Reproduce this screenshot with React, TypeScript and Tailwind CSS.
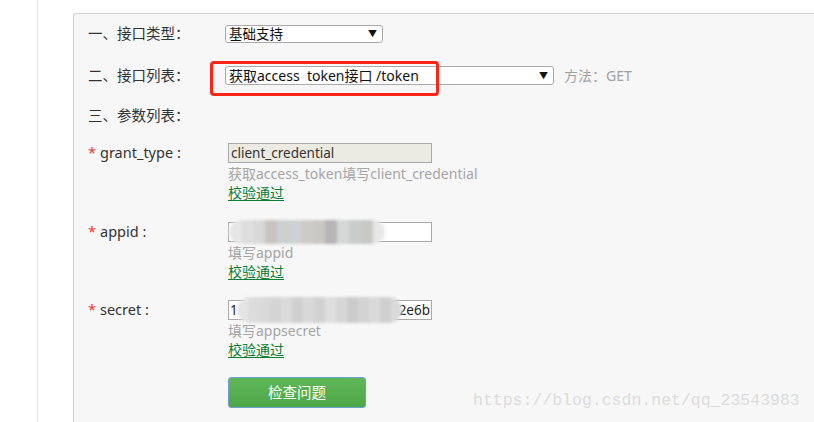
const font = "font-['Noto_Sans','Noto_Sans_CJK_SC',sans-serif]";

const Check = () => (
  <p className="h-[18px] leading-[18px] text-[14px] text-[#0a7d36] underline underline-offset-2">校验通过</p>
);

const Blur = ({ cells }: { cells: string[] }) => (
  <div className="absolute inset-y-[-3px] left-0 flex blur-[1.5px] rounded-full overflow-hidden">
    {cells.map((c, i) => (
      <div key={i} className="w-[12px] h-full" style={{ background: c }} />
    ))}
  </div>
);

const Field = ({
  label,
  hint,
  children,
  mt,
}: {
  label: string;
  hint: string;
  children: React.ReactNode;
  mt: string;
}) => (
  <div className={`flex ${mt}`}>
    <div className="w-[140px] h-[20px] flex items-center text-[14.5px] text-[#333]">
      <span className="text-[#e33] mr-[4px]">*</span>
      {label}
    </div>
    <div className="flex flex-col">
      {children}
      <p className="h-[20px] mt-[1px] leading-[20px] text-[14px] text-[#a5a5a5]">{hint}</p>
      <Check />
    </div>
  </div>
);

export default function App() {
  return (
    <div className={`relative w-[814px] h-[422px] overflow-hidden bg-white flex ${font}`}>
      <div className="w-[38px] h-full border-r border-[#e6e6e6] shrink-0" />
      <div className="ml-[35px] mt-[13px] flex-1 bg-[#f7f7f7] border-l border-t border-[#cfcfcf] rounded-tl-[3px] pl-[14px] pt-[11px]">
        {/* row 1 */}
        <div className="flex items-center h-[18px]">
          <div className="w-[137px] text-[14.5px] text-[#333]">一、接口类型：</div>
          <div className="w-[158px] h-[18px] bg-white border border-[#aaa] rounded-[3px] flex items-center justify-between pl-[3px] pr-[5px] text-[13.5px] text-[#111]">
            <span>基础支持</span>
            <span className="text-[9px]">▼</span>
          </div>
        </div>
        {/* row 2 */}
        <div className="flex items-center h-[19px] mt-[23px]">
          <div className="w-[137px] text-[14.5px] text-[#333]">二、接口列表：</div>
          <div className="relative w-[329px] h-[19px] bg-white border border-[#aaa] rounded-[3px] flex items-center justify-between pl-[3px] pr-[5px] text-[14px] text-[#111]">
            <span className="whitespace-pre">获取access  token接口 /token</span>
            <span className="text-[9px]">▼</span>
            <div className="absolute left-[-16px] top-[-6px] w-[229px] h-[35px] border-[3px] border-[#fe2418] rounded-[4px]" />
          </div>
          <span className="ml-[10px] text-[14px] text-[#a0a0a0]">方法：GET</span>
        </div>
        {/* row 3 */}
        <div className="h-[18px] leading-[18px] mt-[21px] text-[14.5px] text-[#333]">三、参数列表：</div>

        <Field label="grant_type :" hint="获取access_token填写client_credential" mt="mt-[19px]">
          <div className="w-[204px] h-[20px] bg-[#ebebe4] border border-[#a9a9a9] pl-[2px] text-[13.5px] leading-[18px] text-[#333]">
            client_credential
          </div>
        </Field>

        <Field label="appid :" hint="填写appid" mt="mt-[20px]">
          <div className="relative w-[204px] h-[20px] bg-white border border-[#a9a9a9]">
            <Blur
              cells={["#e6e6e6", "#dedede", "#d8d8d8", "#c7c4c2", "#cdd0d1", "#cfd2d3", "#cdcbc6", "#c9c8c1", "#b7b5b8", "#d6d7d7", "#cacccc", "#c8c8c6", "#e8e8e8"]}
            />
          </div>
        </Field>

        <Field label="secret :" hint="填写appsecret" mt="mt-[19px]">
          <div className="relative w-[204px] h-[20px] bg-white border border-[#a9a9a9] flex items-center justify-between px-[1px] text-[13.5px] text-[#222] overflow-visible">
            <span>1</span>
            <span>2e6b</span>
            <div className="absolute left-[8px] inset-y-[-4px] flex blur-[1.5px] rounded-full overflow-hidden">
              {["#e4e4e4", "#dcdcdc", "#d9d9d9", "#d4d4d4", "#dadada", "#cfcfcf", "#d8d8d8", "#d2d2d2", "#dedede", "#d6d6d6", "#cbcbcb", "#d3d3d3", "#d9d9d9", "#cfcfcf", "#dadada"].map((c, i) => (
                <div key={i} className="w-[11px] h-full" style={{ background: c }} />
              ))}
            </div>
          </div>
        </Field>

        <div className="ml-[140px] mt-[18px] w-[138px] h-[31px] rounded-[3px] border border-[#6d9fd0] bg-gradient-to-b from-[#5fb757] to-[#4ea746] flex items-center justify-center text-[14.5px] text-white">
          检查问题
        </div>
      </div>
      <div className="absolute left-[473px] top-[390px] font-['Liberation_Mono',monospace] text-[16.5px] text-[#dcdcdc] leading-[22px] whitespace-nowrap">
        https://blog.csdn.net/qq_23543983
      </div>
    </div>
  );
}
